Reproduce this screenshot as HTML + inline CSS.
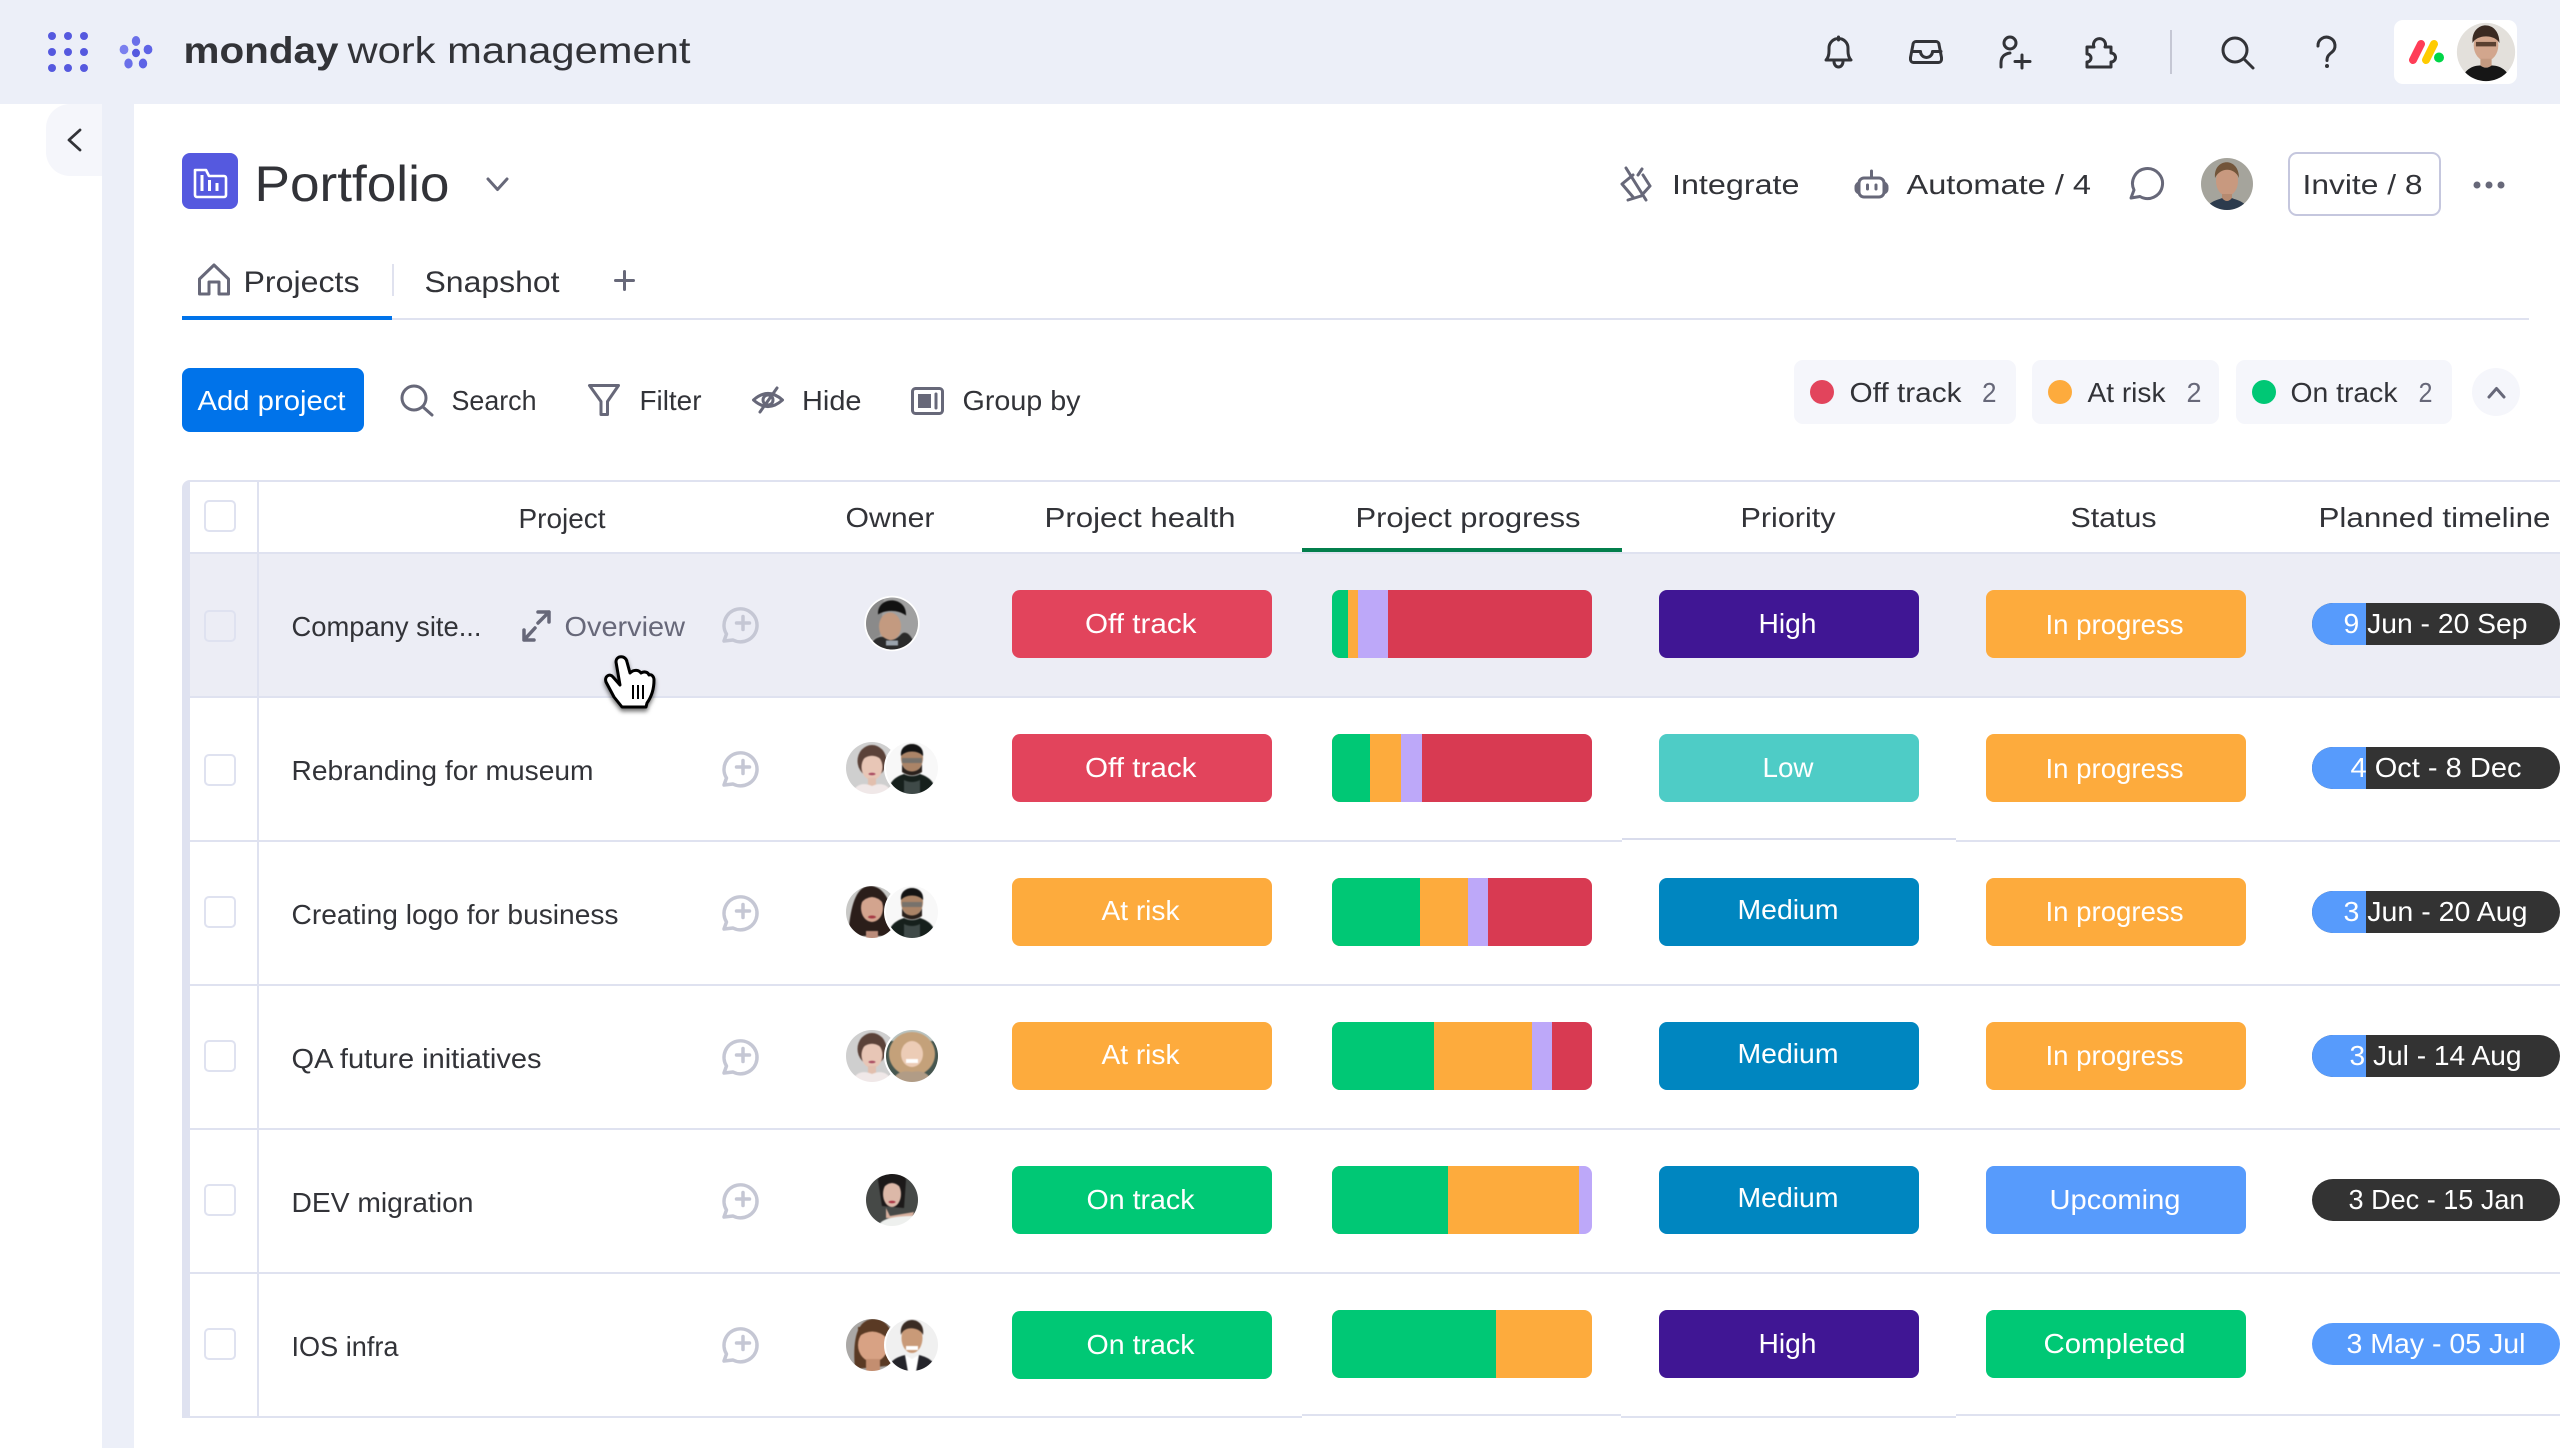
<!DOCTYPE html>
<html lang="en">
<head>
<meta charset="utf-8">
<title>Portfolio - monday work management</title>
<style>
html,body{margin:0;padding:0;background:#fff;width:2560px;height:1448px;overflow:hidden}
svg{display:block}
text{font-family:"Liberation Sans",sans-serif;fill:#323338;font-size:28px;transform:translateX(-1.5px)}
.w{fill:#fff}
.g{fill:#676879}
.i{fill:none;stroke:#676879;stroke-width:3;stroke-linecap:round;stroke-linejoin:round}
.d{fill:none;stroke:#323338;stroke-width:3;stroke-linecap:round;stroke-linejoin:round}
.c{fill:none;stroke:#c5c7d4;stroke-width:3.5;stroke-linecap:round;stroke-linejoin:round}
.l{fill:#dfe2f0}
.cb{fill:none;stroke:#dfe2f0;stroke-width:2}
.s{filter:blur(.5px)}
</style>
</head>
<body>
<svg xmlns="http://www.w3.org/2000/svg" width="2560" height="1448" viewBox="0 0 2560 1448">
<defs>
<clipPath id="pc"><rect x="1332" y="0" width="260" height="68" rx="8"/></clipPath>
<clipPath id="tc"><rect x="2312" y="0" width="248" height="42" rx="21"/></clipPath>
<clipPath id="av"><circle r="26"/></clipPath>
<g id="cm"><path class="c" d="M-17 17 l2.5-7 a16.5 16.5 0 1 1 6.5 6 z M2-7.5 v13 M-4.500-1 h13"/></g>
<g id="a1" clip-path="url(#av)"><g class="s"><rect x="-27" y="-27" width="54" height="54" fill="#a0a0a0"/><path d="M-27-27H-8L-12 12-27 20Z" fill="#8a8a8a"/><ellipse cx="-2" cy="3" rx="11" ry="14" fill="#c39a80"/><path d="M-14-9C-15-28 15-28 14-8C6-14-6-14-14-9Z" fill="#111"/><path d="M-22 27 C-22 14-10 12-8 14 Q0 20 8 12 C14 4 22 14 24 27Z" fill="#2b2b2b"/><rect x="-6" y="17" width="12" height="5" fill="#9aa3ac"/></g></g>
<g id="a2" clip-path="url(#av)"><g class="s"><rect x="-27" y="-27" width="54" height="54" fill="#cfcfcf"/><ellipse cx="0" cy="-7" rx="14.5" ry="16" fill="#5b4239"/><ellipse cx="0" cy="-1" rx="10.500" ry="13" fill="#e8c6b6"/><path d="M-10-7C-6-14 6-14 10-7L10-16-10-16Z" fill="#5b4239"/><ellipse cx="0" cy="6" rx="3.500" ry="1.300" fill="#a8485e"/><rect x="-4" y="10" width="8" height="8" fill="#e2bfae"/><path d="M-20 27C-18 16-8 14 0 18C8 14 18 16 20 27Z" fill="#f0e8e8"/></g></g>
<g id="a3" clip-path="url(#av)"><g class="s"><rect x="-27" y="-27" width="54" height="54" fill="#f8f8f8"/><ellipse cx="0" cy="-10" rx="11" ry="14" fill="#ab8467"/><path d="M-11-12C-13-28 13-28 11-12C6-18-6-18-11-12Z" fill="#141414"/><path d="M-10-4C-7 6 7 6 10-4L10 4Q0 11-10 4Z" fill="#2a211c"/><rect x="-10" y="-10" width="20" height="5" fill="#77726c"/><path d="M-24 27C-24 12-14 8-8 6Q0 10 8 6C14 8 24 12 24 27Z" fill="#16201c"/><path d="M-8 27V12Q0 16 8 12V27Z" fill="#3f4a48"/></g></g>
<g id="a4" clip-path="url(#av)"><g class="s"><rect x="-27" y="-27" width="54" height="54" fill="#c8c8c6"/><path d="M-2-26C-18-26-22 0-24 24H24C22 0 16-26-2-26Z" fill="#2b1e1a"/><ellipse cx="0" cy="-4" rx="11" ry="14" fill="#d3a48e"/><ellipse cx="0" cy="5" rx="4" ry="1.500" fill="#a53a44"/><path d="M-12-8Q0-22 12-8L12-18-12-18Z" fill="#2b1e1a"/><rect x="-6" y="19" width="12" height="8" fill="#bb8c7a"/></g></g>
<g id="a5" clip-path="url(#av)"><g class="s"><rect x="-27" y="-27" width="54" height="54" fill="#46564f"/><rect x="-27" y="-27" width="54" height="12" fill="#b9c4c2"/><ellipse cx="0" cy="-2" rx="23" ry="22" fill="#c4a17a"/><ellipse cx="0" cy="-2" rx="11" ry="13" fill="#ecccb6"/><rect x="-6" y="3" width="12" height="4" fill="#fff"/><path d="M-20 27C-18 16-8 14 0 16C8 14 18 16 20 27Z" fill="#b19c86"/></g></g>
<g id="a6" clip-path="url(#av)"><g class="s"><rect x="-27" y="-27" width="54" height="54" fill="#464947"/><path d="M-14-20C-12-30 12-30 14-20L12 8-10 6Z" fill="#1c1919"/><ellipse cx="0" cy="-6" rx="9" ry="13" fill="#dcb8a8"/><path d="M-9-12Q0-22 9-12V-20H-9Z" fill="#1c1919"/><ellipse cx="0" cy="2" rx="3.500" ry="1.300" fill="#a83040"/><path d="M-6 8L-2 16L22 12L20 20L-6 18Z" fill="#d7b09e"/><path d="M-14 27C-12 18 4 16 22 16V27Z" fill="#eef0ee"/></g></g>
<g id="a7" clip-path="url(#av)"><g class="s"><rect x="-27" y="-27" width="54" height="54" fill="#aaa8a6"/><path d="M-17 24C-20-8-14-26 2-26C18-26 24-8 24 20Z" fill="#5a3a24"/><ellipse cx="1" cy="0" rx="15" ry="17" fill="#d8a284"/><path d="M-14-8Q2-20 16-6V-18H-14Z" fill="#5a3a24"/><rect x="-6" y="14" width="14" height="14" fill="#c38e70"/></g></g>
<g id="a8" clip-path="url(#av)"><g class="s"><rect x="-27" y="-27" width="54" height="54" fill="#f0f0f0"/><ellipse cx="0" cy="-7" rx="10.500" ry="15" fill="#c99a78"/><path d="M-11-10C-14-30 14-30 11-10C8-18-8-20-11-10Z" fill="#3a2c24"/><rect x="-6" y="1" width="12" height="4" fill="#fff"/><path d="M-26 27C-22 14-14 12-7 10L0 27ZM26 27C22 14 14 12 7 10L0 27Z" fill="#24242a"/><path d="M-7 10L0 14L7 10L4 27H-4Z" fill="#fff"/></g></g>
</defs>

<!-- Page chrome -->
<rect width="2560" height="1448" fill="#fff"/>
<rect width="2560" height="104" fill="#eceff8"/>
<rect x="102" y="104" width="32" height="1344" fill="#eceff8"/>
<path d="M134 1448V134a30 30 0 0 1 30-30H2560V1448Z" fill="#fff"/>
<path d="M70 104H102V176H70A24 24 0 0 1 46 152V128A24 24 0 0 1 70 104Z" fill="#f5f6fb"/>
<path d="M80 130L69 140L80 150" fill="none" stroke="#323338" stroke-width="2.800" stroke-linecap="round" stroke-linejoin="round"/>

<!-- Top bar left -->
<g fill="#5559df"><ellipse cx="52" cy="36" rx="4" ry="4"/><ellipse cx="68" cy="36" rx="4" ry="4"/><ellipse cx="84" cy="36" rx="4" ry="4"/><ellipse cx="52" cy="52" rx="4" ry="4"/><ellipse cx="68" cy="52" rx="4" ry="4"/><ellipse cx="84" cy="52" rx="4" ry="4"/><ellipse cx="52" cy="68" rx="4" ry="4"/><ellipse cx="68" cy="68" rx="4" ry="4"/><ellipse cx="84" cy="68" rx="4" ry="4"/></g>
<g><ellipse cx="136" cy="41" rx="4.200" ry="5" fill="#6a6fe9"/><ellipse cx="124" cy="49.500" rx="4.400" ry="4.800" fill="#7b80ef"/><ellipse cx="148" cy="49.500" rx="4.400" ry="4.800" fill="#5e63e6"/><ellipse cx="136" cy="53" rx="4" ry="4.200" fill="#5559df"/><ellipse cx="128.500" cy="63.500" rx="4.200" ry="5" fill="#6a6fe9"/><ellipse cx="143" cy="63.500" rx="4.200" ry="5" fill="#5e63e6"/></g>
<text x="185" y="63" style="font-size:37px;font-weight:700" textLength="155" lengthAdjust="spacingAndGlyphs">monday</text>
<text x="349" y="63" style="font-size:37px" textLength="343" lengthAdjust="spacingAndGlyphs">work management</text>

<!-- Top bar right icons -->
<path class="d" d="M1838.500 37v3M1826 60q3-3 3-9v-3a9.500 9.500 0 0 1 19 0v3q0 6 3 9zM1834 61.500a4.500 5.500 0 0 0 9 0"/>
<path class="d" d="M1917 41.500h19a3 3 0 0 1 3 3l2.500 13v2a3 3 0 0 1-3 3h-25a3 3 0 0 1-3-3v-2l2.500-13a3 3 0 0 1 3-3zM1912 51.500h8.500a6 6 0 0 0 12 0h8.500"/>
<path class="d" d="M2016 43a6 6 0 1 1-12 0a6 6 0 1 1 12 0zM2001 67v-4c0-6 3-9 9-10M2022 55v13M2015 61.500h15"/>
<path class="d" d="M2087 47h7a6 6 0 1 1 11 0h6v6a4.500 4.500 0 1 1 0 9v5h-24v-5a4 4 0 0 0 0-8z"/>
<rect x="2170" y="30" width="2" height="44" fill="#c5c7d4"/>
<path class="d" d="M2247 50a12 12 0 1 1-24 0a12 12 0 1 1 24 0zM2244 59l9 9"/>
<path class="d" d="M2318 46a8.500 8.500 0 1 1 13.500 6.500c-3 2.500-4.500 4-4.500 8"/><circle cx="2327" cy="66" r="2" fill="#323338"/>
<rect x="2394" y="20" width="123" height="64" rx="9" fill="#fff"/>
<path d="M2413 60L2421 44" stroke-width="8" stroke-linecap="round" fill="none" stroke="#ff3d57"/>
<path d="M2426 60L2434 44" stroke-width="8" stroke-linecap="round" fill="none" stroke="#ffcb00"/>
<circle cx="2439" cy="57.500" r="5" fill="#00d647"/>
<g transform="translate(2486,52) scale(1.120)"><g clip-path="url(#av)"><rect x="-27" y="-27" width="54" height="54" fill="#e3e0db"/><ellipse cx="0" cy="-6" rx="11" ry="14" fill="#d2a68d"/><path d="M-12-8C-14-28 12-30 12-8C8-16-8-16-12-8Z" fill="#3a2a22"/><rect x="-9" y="-9" width="18" height="4" fill="#5a4030"/><rect x="-5" y="6" width="10" height="8" fill="#c49a80"/><path d="M-22 27C-20 14-10 12-5 12Q0 16 5 12C10 12 20 14 22 27Z" fill="#161616"/></g></g>

<!-- Title row -->
<rect x="182" y="153" width="56" height="56" rx="8" fill="#5559df"/>
<path d="M195 170h11l3 6h15a2 2 0 0 1 2 2v17a2 2 0 0 1-2 2h-27a2 2 0 0 1-2-2z" fill="none" stroke="#fff" stroke-width="2.600" stroke-linejoin="round"/>
<path d="M202 175v16M209.500 180v11M217 183v8" stroke="#fff" stroke-width="3" fill="none"/>
<text x="256" y="201" style="font-size:50px" textLength="195" lengthAdjust="spacingAndGlyphs">Portfolio</text>
<path class="i" d="M488 179l9.500 10.500L507 179"/>

<path class="i" d="M1626 168l20 32M1642 169l-4 6M1622 184l11-9M1622 184l11 13M1650 186l-7-11M1650 186l-9 10M1641 196l-13 4"/>
<text x="1673.500" y="194" textLength="127.500" lengthAdjust="spacingAndGlyphs">Integrate</text>
<path class="i" d="M1871.500 171v6M1864 178h15a5 5 0 0 1 5 5v9a5 5 0 0 1-5 5h-15a5 5 0 0 1-5-5v-9a5 5 0 0 1 5-5zM1859 183a4 4 0 0 0-3 4v2a4 4 0 0 0 3 4M1884 183a4 4 0 0 1 3 4v2a4 4 0 0 1-3 4M1867.500 185v4M1876 185v4"/>
<text x="1908" y="194" textLength="184.500" lengthAdjust="spacingAndGlyphs">Automate / 4</text>
<path class="i" d="M2131 198l3-8a15 15 0 1 1 6 6.500z"/>
<g transform="translate(2227,184)"><g clip-path="url(#av)"><rect x="-27" y="-27" width="54" height="54" fill="#a5a49c"/><ellipse cx="0" cy="-3" rx="11" ry="15" fill="#c8997f"/><path d="M-12-6C-14-26 12-28 12-6C8-16-6-18-12-6Z" fill="#72553a"/><rect x="-5" y="10" width="10" height="8" fill="#b68a70"/><path d="M-22 27C-18 16-8 16-5 14Q0 20 5 14C8 16 18 16 22 27Z" fill="#2c3b4d"/></g></g>
<rect x="2289" y="153" width="151" height="62" rx="8" fill="#fff" stroke="#c5c7de" stroke-width="2"/>
<text x="2304" y="194" textLength="120" lengthAdjust="spacingAndGlyphs">Invite / 8</text>
<g fill="#676879"><circle cx="2477" cy="185" r="3.500"/><circle cx="2489" cy="185" r="3.500"/><circle cx="2501" cy="185" r="3.500"/></g>

<!-- Tabs -->
<path class="i" d="M199.500 279L214 265L228.500 279V294H219V282H209V294H199.500Z"/>
<text x="245" y="292" style="font-size:30px" textLength="116" lengthAdjust="spacingAndGlyphs">Projects</text>
<rect x="392" y="264" width="2" height="32" fill="#e0e2ef"/>
<text x="426" y="292" style="font-size:30px" textLength="135" lengthAdjust="spacingAndGlyphs">Snapshot</text>
<path class="i" d="M624.500 271.500v18M615.500 280.500h18"/>
<rect x="182" y="318" width="2347" height="2" fill="#dfe2f0"/>
<rect x="182" y="316" width="210" height="4" fill="#0073ea"/>

<!-- Toolbar -->
<rect x="182" y="368" width="182" height="64" rx="8" fill="#0073ea"/>
<text class="w" x="199" y="410" textLength="148" lengthAdjust="spacingAndGlyphs">Add project</text>
<path class="i" d="M426 398a12 12 0 1 1-24 0a12 12 0 1 1 24 0zM423 407l9 8"/>
<text x="453" y="410" textLength="85" lengthAdjust="spacingAndGlyphs">Search</text>
<path class="i" d="M589.500 385.500h29l-11 16v13h-6.500v-13z"/>
<text x="641" y="410" textLength="62" lengthAdjust="spacingAndGlyphs">Filter</text>
<path class="i" d="M753.500 400q14.500-13 29 0q-14.500 13-29 0zM773 400a5 5 0 1 1-10 0a5 5 0 1 1 10 0zM760 412l17-24"/>
<text x="803.500" y="410" textLength="59.500" lengthAdjust="spacingAndGlyphs">Hide</text>
<rect class="i" x="912.500" y="388.500" width="30" height="25" rx="3"/>
<rect x="918" y="394" width="13" height="14" fill="#676879"/><path d="M936 394v14" class="i"/>
<text x="964" y="410" textLength="118" lengthAdjust="spacingAndGlyphs">Group by</text>

<!-- Chips -->
<g fill="#f5f6fb"><rect x="1794" y="360" width="222" height="64" rx="9"/><rect x="2032" y="360" width="187" height="64" rx="9"/><rect x="2236" y="360" width="216" height="64" rx="9"/><circle cx="2496" cy="392" r="24"/></g>
<circle cx="1822" cy="392" r="12" fill="#e2445c"/><circle cx="2060" cy="392" r="12" fill="#fdab3d"/><circle cx="2264" cy="392" r="12" fill="#00c875"/>
<text x="1851" y="402" textLength="112" lengthAdjust="spacingAndGlyphs">Off track</text>
<text class="g" x="1983.500" y="402" textLength="14.500" lengthAdjust="spacingAndGlyphs">2</text>
<text x="2089" y="402" textLength="78" lengthAdjust="spacingAndGlyphs">At risk</text>
<text class="g" x="2188" y="402" textLength="15" lengthAdjust="spacingAndGlyphs">2</text>
<text x="2292" y="402" textLength="107" lengthAdjust="spacingAndGlyphs">On track</text>
<text class="g" x="2420" y="402" textLength="14" lengthAdjust="spacingAndGlyphs">2</text>
<path class="i" d="M2489 397l7.500-8.500l7.500 8.500"/>

<!-- Table -->
<rect x="190" y="554" width="2370" height="142" fill="#ecedf5"/>
<path class="l" d="M182 488a8 8 0 0 1 8-8H2560V482H190V1416H1302V1418H182Z"/>
<rect x="257" y="482" width="2" height="934" fill="#dfe2f0"/>
<rect class="l" x="190" y="552" width="2370" height="2"/>
<rect class="l" x="190" y="696" width="2370" height="2"/>
<rect class="l" x="190" y="840" width="1432" height="2"/>
<rect x="1622" y="838" width="334" height="2" fill="#d9dcec"/>
<rect class="l" x="1956" y="840" width="604" height="2"/>
<rect class="l" x="190" y="984" width="2370" height="2"/>
<rect class="l" x="190" y="1128" width="2370" height="2"/>
<rect class="l" x="190" y="1272" width="2370" height="2"/>
<rect class="l" x="1302" y="1414" width="319" height="2"/>
<rect class="l" x="1621" y="1416" width="335" height="2"/>
<rect class="l" x="1956" y="1414" width="604" height="2"/>
<rect x="1302" y="548" width="320" height="4" fill="#037f4c"/>

<!-- Headers -->
<text x="520" y="528" textLength="87" lengthAdjust="spacingAndGlyphs">Project</text>
<text x="847" y="527" textLength="89" lengthAdjust="spacingAndGlyphs">Owner</text>
<text x="1046" y="527" textLength="191" lengthAdjust="spacingAndGlyphs">Project health</text>
<text x="1357" y="527" textLength="225" lengthAdjust="spacingAndGlyphs">Project progress</text>
<text x="1742" y="527" textLength="95" lengthAdjust="spacingAndGlyphs">Priority</text>
<text x="2072" y="527" textLength="86" lengthAdjust="spacingAndGlyphs">Status</text>
<text x="2320" y="527" textLength="232" lengthAdjust="spacingAndGlyphs">Planned timeline</text>

<!-- Checkboxes -->
<rect class="cb" x="205" y="501" width="30" height="30" rx="4"/>
<rect class="cb" x="205" y="611" width="30" height="30" rx="4"/>
<rect class="cb" x="205" y="755" width="30" height="30" rx="4"/>
<rect class="cb" x="205" y="897" width="30" height="30" rx="4"/>
<rect class="cb" x="205" y="1041" width="30" height="30" rx="4"/>
<rect class="cb" x="205" y="1185" width="30" height="30" rx="4"/>
<rect class="cb" x="205" y="1329" width="30" height="30" rx="4"/>

<!-- Project names -->
<text x="293" y="636" textLength="190" lengthAdjust="spacingAndGlyphs">Company site...</text>
<text x="293" y="780" textLength="302" lengthAdjust="spacingAndGlyphs">Rebranding for museum</text>
<text x="293" y="924" textLength="327" lengthAdjust="spacingAndGlyphs">Creating logo for business</text>
<text x="293" y="1068" textLength="250" lengthAdjust="spacingAndGlyphs">QA future initiatives</text>
<text x="293" y="1212" textLength="182" lengthAdjust="spacingAndGlyphs">DEV migration</text>
<text x="293" y="1356" textLength="107" lengthAdjust="spacingAndGlyphs">IOS infra</text>
<path class="i" style="stroke-width:3.500" d="M524 640L535 628M538 623L549 612M538 612H549V622M524 630V640H534"/>
<text class="g" x="566" y="636" textLength="120.500" lengthAdjust="spacingAndGlyphs">Overview</text>

<use href="#cm" x="741" y="624"/><use href="#cm" x="741" y="768"/><use href="#cm" x="741" y="912"/><use href="#cm" x="741" y="1056"/><use href="#cm" x="741" y="1200"/><use href="#cm" x="741" y="1344"/>

<!-- Avatars -->
<circle cx="892" cy="623.500" r="27.700" fill="#fff"/><use href="#a1" x="892" y="623.500"/>
<use href="#a2" x="872" y="768"/><circle cx="912" cy="768" r="28" fill="#fff"/><use href="#a3" x="912" y="768"/>
<use href="#a4" x="872" y="912"/><circle cx="912" cy="912" r="28" fill="#fff"/><use href="#a3" x="912" y="912"/>
<use href="#a2" x="872" y="1056"/><circle cx="912" cy="1056" r="28" fill="#fff"/><use href="#a5" x="912" y="1056"/>
<use href="#a6" x="892" y="1200"/>
<use href="#a7" x="872" y="1345"/><circle cx="912" cy="1345" r="28" fill="#fff"/><use href="#a8" x="912" y="1345"/>

<!-- Project health -->
<rect x="1012" y="590" width="260" height="68" rx="8" fill="#e2445c"/>
<rect x="1012" y="734" width="260" height="68" rx="8" fill="#e2445c"/>
<rect x="1012" y="878" width="260" height="68" rx="8" fill="#fdab3d"/>
<rect x="1012" y="1022" width="260" height="68" rx="8" fill="#fdab3d"/>
<rect x="1012" y="1166" width="260" height="68" rx="8" fill="#00c875"/>
<rect x="1012" y="1311" width="260" height="68" rx="8" fill="#00c875"/>
<text class="w" x="1086.500" y="633" textLength="111.500" lengthAdjust="spacingAndGlyphs">Off track</text>
<text class="w" x="1086.500" y="777" textLength="111.500" lengthAdjust="spacingAndGlyphs">Off track</text>
<text class="w" x="1103" y="920" textLength="78" lengthAdjust="spacingAndGlyphs">At risk</text>
<text class="w" x="1103" y="1064" textLength="78" lengthAdjust="spacingAndGlyphs">At risk</text>
<text class="w" x="1088" y="1209" textLength="108" lengthAdjust="spacingAndGlyphs">On track</text>
<text class="w" x="1088" y="1354" textLength="108" lengthAdjust="spacingAndGlyphs">On track</text>

<!-- Progress -->
<g transform="translate(0,590)" clip-path="url(#pc)"><rect x="1332" width="260" height="68" fill="#d83a52"/><rect x="1332" width="56" height="68" fill="#bda8f9"/><rect x="1332" width="26" height="68" fill="#fdab3d"/><rect x="1332" width="16" height="68" fill="#00c875"/></g>
<g transform="translate(0,734)" clip-path="url(#pc)"><rect x="1332" width="260" height="68" fill="#d83a52"/><rect x="1332" width="90" height="68" fill="#bda8f9"/><rect x="1332" width="69" height="68" fill="#fdab3d"/><rect x="1332" width="38" height="68" fill="#00c875"/></g>
<g transform="translate(0,878)" clip-path="url(#pc)"><rect x="1332" width="260" height="68" fill="#d83a52"/><rect x="1332" width="156" height="68" fill="#bda8f9"/><rect x="1332" width="136" height="68" fill="#fdab3d"/><rect x="1332" width="88" height="68" fill="#00c875"/></g>
<g transform="translate(0,1022)" clip-path="url(#pc)"><rect x="1332" width="260" height="68" fill="#d83a52"/><rect x="1332" width="220" height="68" fill="#bda8f9"/><rect x="1332" width="200" height="68" fill="#fdab3d"/><rect x="1332" width="102" height="68" fill="#00c875"/></g>
<g transform="translate(0,1166)" clip-path="url(#pc)"><rect x="1332" width="260" height="68" fill="#bda8f9"/><rect x="1332" width="247" height="68" fill="#fdab3d"/><rect x="1332" width="116" height="68" fill="#00c875"/></g>
<g transform="translate(0,1310)" clip-path="url(#pc)"><rect x="1332" width="260" height="68" fill="#fdab3d"/><rect x="1332" width="164" height="68" fill="#00c875"/></g>

<!-- Priority -->
<rect x="1659" y="590" width="260" height="68" rx="8" fill="#401694"/>
<rect x="1659" y="734" width="260" height="68" rx="8" fill="#4eccc6"/>
<rect x="1659" y="878" width="260" height="68" rx="8" fill="#0086c0"/>
<rect x="1659" y="1022" width="260" height="68" rx="8" fill="#0086c0"/>
<rect x="1659" y="1166" width="260" height="68" rx="8" fill="#0086c0"/>
<rect x="1659" y="1310" width="260" height="68" rx="8" fill="#401694"/>
<text class="w" x="1760" y="633" textLength="58" lengthAdjust="spacingAndGlyphs">High</text>
<text class="w" x="1764" y="777" textLength="51" lengthAdjust="spacingAndGlyphs">Low</text>
<text class="w" x="1739" y="919" textLength="101" lengthAdjust="spacingAndGlyphs">Medium</text>
<text class="w" x="1739" y="1063" textLength="101" lengthAdjust="spacingAndGlyphs">Medium</text>
<text class="w" x="1739" y="1207" textLength="101" lengthAdjust="spacingAndGlyphs">Medium</text>
<text class="w" x="1760" y="1353" textLength="58" lengthAdjust="spacingAndGlyphs">High</text>

<!-- Status -->
<rect x="1986" y="590" width="260" height="68" rx="8" fill="#fdab3d"/>
<rect x="1986" y="734" width="260" height="68" rx="8" fill="#fdab3d"/>
<rect x="1986" y="878" width="260" height="68" rx="8" fill="#fdab3d"/>
<rect x="1986" y="1022" width="260" height="68" rx="8" fill="#fdab3d"/>
<rect x="1986" y="1166" width="260" height="68" rx="8" fill="#579bfc"/>
<rect x="1986" y="1310" width="260" height="68" rx="8" fill="#00c875"/>
<text class="w" x="2047" y="634" textLength="138" lengthAdjust="spacingAndGlyphs">In progress</text>
<text class="w" x="2047" y="778" textLength="138" lengthAdjust="spacingAndGlyphs">In progress</text>
<text class="w" x="2047" y="921" textLength="138" lengthAdjust="spacingAndGlyphs">In progress</text>
<text class="w" x="2047" y="1065" textLength="138" lengthAdjust="spacingAndGlyphs">In progress</text>
<text class="w" x="2051" y="1209" textLength="131" lengthAdjust="spacingAndGlyphs">Upcoming</text>
<text class="w" x="2045" y="1353" textLength="142" lengthAdjust="spacingAndGlyphs">Completed</text>

<!-- Timeline -->
<g transform="translate(0,603)" clip-path="url(#tc)"><rect x="2312" width="248" height="42" fill="#333"/><rect x="2312" width="54" height="42" fill="#579bfc"/></g>
<g transform="translate(0,747)" clip-path="url(#tc)"><rect x="2312" width="248" height="42" fill="#333"/><rect x="2312" width="54" height="42" fill="#579bfc"/></g>
<g transform="translate(0,891)" clip-path="url(#tc)"><rect x="2312" width="248" height="42" fill="#333"/><rect x="2312" width="54" height="42" fill="#579bfc"/></g>
<g transform="translate(0,1035)" clip-path="url(#tc)"><rect x="2312" width="248" height="42" fill="#333"/><rect x="2312" width="54" height="42" fill="#579bfc"/></g>
<g transform="translate(0,1179)" clip-path="url(#tc)"><rect x="2312" width="248" height="42" fill="#333"/></g>
<g transform="translate(0,1323)" clip-path="url(#tc)"><rect x="2312" width="248" height="42" fill="#579bfc"/></g>
<text class="w" x="2345" y="633" textLength="184" lengthAdjust="spacingAndGlyphs">9 Jun - 20 Sep</text>
<text class="w" x="2352" y="777" textLength="171" lengthAdjust="spacingAndGlyphs">4 Oct - 8 Dec</text>
<text class="w" x="2345" y="921" textLength="184" lengthAdjust="spacingAndGlyphs">3 Jun - 20 Aug</text>
<text class="w" x="2351" y="1065" textLength="172" lengthAdjust="spacingAndGlyphs">3 Jul - 14 Aug</text>
<text class="w" x="2350" y="1209" textLength="176" lengthAdjust="spacingAndGlyphs">3 Dec - 15 Jan</text>
<text class="w" x="2348" y="1353" textLength="179" lengthAdjust="spacingAndGlyphs">3 May - 05 Jul</text>

<!-- Cursor -->
<g style="filter:drop-shadow(0 3px 2px rgba(0,0,0,.55))">
<path d="M616 662C616 655 626 655 627 662L630 673C634 669 639 670 641 673C644 671 648 672 649 675C652 674 654 677 654 680C654 688 652 696 647 703L646 707H622L614 697L606 682C604 676 610 673 613 677L620 685Z" fill="#fff" stroke="#000" stroke-width="3" stroke-linejoin="round"/>
<path d="M633 685V699M638 685V699M643 685V699" stroke="#000" stroke-width="2" fill="none"/>
</g>
</svg>
</body>
</html>
